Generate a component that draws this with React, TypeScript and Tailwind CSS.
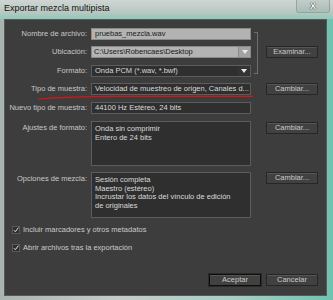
import React from 'react';

const font = { fontFamily: '"Liberation Sans", Arial, sans-serif' };

const Arrow = () => (
  <svg width="6" height="4" viewBox="0 0 6 4">
    <path d="M0 0 L6 0 L3 4 Z" fill="#e8e8e8" />
  </svg>
);

const Label = ({ children, top }: { children: React.ReactNode; top?: boolean }) => (
  <div
    className={`w-[83px] shrink-0 text-right pr-[1px] text-[#c8c8c8] text-[7.5px] leading-[12px] ${top ? 'pt-[1px]' : ''}`}
  >
    {children}
  </div>
);

const Button = ({ children, focused }: { children: React.ReactNode; focused?: boolean }) => (
  <div
    className={`w-[52px] h-[12px] flex items-center justify-center bg-[#414141] text-[#cacaca] text-[7.5px] leading-none ${
      focused ? 'border border-[#0e0e0e] outline outline-1 outline-[#2a2a2a]' : 'border border-[#262626]'
    } shadow-[inset_0_1px_0_#555]`}
  >
    {children}
  </div>
);

const Check = ({ children }: { children: React.ReactNode }) => (
  <div className="flex items-center gap-[3px] pl-[7px]">
    <div className="w-[8px] h-[8px] bg-[#2e2e2e] border border-[#5a5a5a] flex items-center justify-center">
      <svg width="8" height="8" viewBox="0 0 8 8">
        <path d="M1.2 4.2 L3.2 6.3 L7.2 0.8" stroke="#e6e6e6" strokeWidth="1.3" fill="none" />
      </svg>
    </div>
    <span className="text-[#cacaca] text-[7.5px] leading-none">{children}</span>
  </div>
);

export default function App() {
  return (
    <div
      style={font}
      className="relative w-[333px] h-[300px] overflow-hidden bg-[linear-gradient(90deg,#a9b3b0_0%,#c4ccc9_35%,#a7cfc5_70%,#6fc2b0_100%)]"
    >
      {/* title bar */}
      <div className="h-[19px] flex items-start justify-between bg-[linear-gradient(180deg,#cfd5d2_0%,#bcc8c3_60%,#8fc9bb_100%)]">
        <span className="pl-[4px] pt-[4px] text-[9px] leading-none text-[#111]">Exportar mezcla multipista</span>
        <div className="mr-[3px] w-[34px] h-[13px] border border-t-0 border-[#8fa7a0] rounded-b-[3px] bg-[linear-gradient(180deg,#c3cdc9,#a8bdb6)] flex items-center justify-center">
          <span className="text-[9px] font-bold leading-none text-white [text-shadow:0_0_1px_#222,0_0_1px_#222]">X</span>
        </div>
      </div>

      {/* panel */}
      <div className="ml-[4px] w-[323px] h-[277px] bg-[#3d3d3d] border border-[#565b59] flex flex-col">
        {/* rows 1-3 with bracket */}
        <div className="flex mt-[8px]">
          <div className="flex flex-col">
            <div className="flex h-[12px]">
              <Label>Nombre de archivo:</Label>
              <div className="ml-[3px] w-[160px] h-[12px] bg-[#b3b3b3] border border-[#8a8a8a] text-[#1a1a1a] text-[7.5px] leading-[10px] pl-[3px]">
                pruebas_mezcla.wav
              </div>
            </div>
            <div className="flex h-[12px] mt-[6px]">
              <Label>Ubicación:</Label>
              <div className="ml-[3px] w-[160px] h-[12px] bg-[#b3b3b3] border border-[#8a8a8a] flex">
                <span className="flex-1 text-[#1a1a1a] text-[7.5px] leading-[10px] pl-[2px]">C:\Users\Robencaes\Desktop</span>
                <div className="w-[12px] border-l border-[#8a8a8a] bg-[#a2a2a2] flex items-center justify-center">
                  <Arrow />
                </div>
              </div>
            </div>
            <div className="flex h-[12px] mt-[7px]">
              <Label>Formato:</Label>
              <div className="ml-[3px] w-[160px] h-[12px] bg-[#2f2f2f] border border-[#5c5c5c] flex">
                <span className="flex-1 text-[#d8d8d8] text-[7.5px] leading-[10px] pl-[3px]">Onda PCM (*.wav, *.bwf)</span>
                <div className="w-[12px] bg-[#333] flex items-center justify-center">
                  <Arrow />
                </div>
              </div>
            </div>
          </div>
          <div className="w-[15px] shrink-0">
            <div className="mt-[4px] ml-[3px] w-[4px] h-[42px] border-t border-r border-b border-[#6e6e6e]" />
          </div>
          <div className="mt-[18px]">
            <Button>Examinar...</Button>
          </div>
        </div>

        {/* tipo de muestra */}
        <div className="flex h-[12px] mt-[6px]">
          <Label>Tipo de muestra:</Label>
          <div className="ml-[3px] w-[160px] h-[12px] bg-[#2f2f2f] border border-[#5c5c5c] text-[#dadada] text-[7.5px] leading-[10px] pl-[3px] whitespace-nowrap overflow-hidden">
            Velocidad de muestreo de origen, Canales d...
          </div>
          <div className="ml-[15px]">
            <Button>Cambiar...</Button>
          </div>
        </div>

        <div className="flex h-[12px] mt-[7px]">
          <Label>Nuevo tipo de muestra:</Label>
          <div className="ml-[3px] w-[160px] h-[12px] bg-[#2f2f2f] border border-[#5c5c5c] text-[#dadada] text-[7.5px] leading-[10px] pl-[3px]">
            44100 Hz Estéreo, 24 bits
          </div>
        </div>

        <div className="flex mt-[7px]">
          <Label top>Ajustes de formato:</Label>
          <div className="ml-[3px] w-[160px] h-[45px] bg-[#2f2f2f] border border-[#5c5c5c] text-[#dadada] text-[7.5px] leading-[8.5px] pl-[3px] pt-[3px]">
            <div>Onda sin comprimir</div>
            <div>Entero de 24 bits</div>
          </div>
          <div className="ml-[15px] mt-[1px]">
            <Button>Cambiar...</Button>
          </div>
        </div>

        <div className="flex mt-[6px]">
          <Label top>Opciones de mezcla:</Label>
          <div className="ml-[3px] w-[160px] h-[46px] bg-[#2f2f2f] border border-[#5c5c5c] text-[#dadada] text-[7.5px] leading-[8.5px] pl-[3px] pt-[3px]">
            <div>Sesión completa</div>
            <div>Maestro (estéreo)</div>
            <div>Incrustar los datos del vínculo de edición</div>
            <div>de originales</div>
          </div>
          <div className="ml-[15px]">
            <Button>Cambiar...</Button>
          </div>
        </div>

        <div className="mt-[8px] flex flex-col gap-[10px]">
          <Check>Incluir marcadores y otros metadatos</Check>
          <Check>Abrir archivos tras la exportación</Check>
        </div>

        <div className="mt-[22px] flex justify-end gap-[5px] pr-[8px]">
          <Button focused>Aceptar</Button>
          <Button>Cancelar</Button>
        </div>
      </div>

      {/* red annotation stroke */}
      <svg className="absolute left-0 top-0 pointer-events-none" width="333" height="300">
        <path
          d="M38 99 C55 97.5 80 96.5 120 96.3 C170 96 220 96 253 96.4"
          stroke="#d81515"
          strokeWidth="1.2"
          fill="none"
        />
      </svg>
    </div>
  );
}
